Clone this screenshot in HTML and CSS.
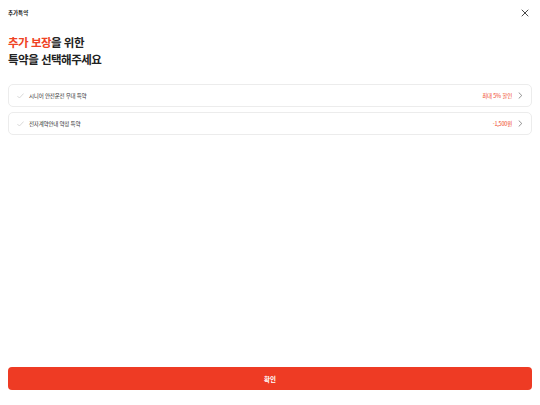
FILE: index.html
```html
<!DOCTYPE html>
<html lang="ko">
<head>
<meta charset="utf-8">
<link rel="stylesheet" href="styles.css">
</head>
<body>
<div class="page">
  <header class="header">
    <span class="header-title">추가특약</span>
    <button class="close" aria-label="닫기">
      <svg width="8" height="8" viewBox="0 0 8 8"><path d="M1 1L7 7M7 1L1 7" stroke="#333" stroke-width="0.9" stroke-linecap="round"/></svg>
    </button>
  </header>
  <h1 class="title"><span class="accent">추가 보장</span>을 위한<br>특약을 선택해주세요</h1>
  <ul class="list">
    <li class="item">
      <svg class="check" width="7" height="6" viewBox="0 0 7 6"><path d="M0.6 3.2L2.4 5L6.4 0.8" fill="none" stroke="#c8c8c8" stroke-width="0.7" stroke-linecap="round" stroke-linejoin="round"/></svg>
      <span class="name">시니어 안전운전 우대 특약</span>
      <span class="benefit">최대 5% 할인</span>
      <svg class="chev" width="5" height="7" viewBox="0 0 5 7"><path d="M1 0.8L3.8 3.5L1 6.2" fill="none" stroke="#777" stroke-width="0.8" stroke-linecap="round" stroke-linejoin="round"/></svg>
    </li>
    <li class="item">
      <svg class="check" width="7" height="6" viewBox="0 0 7 6"><path d="M0.6 3.2L2.4 5L6.4 0.8" fill="none" stroke="#c8c8c8" stroke-width="0.7" stroke-linecap="round" stroke-linejoin="round"/></svg>
      <span class="name">전자계약안내 약정 특약</span>
      <span class="benefit">-1,500원</span>
      <svg class="chev" width="5" height="7" viewBox="0 0 5 7"><path d="M1 0.8L3.8 3.5L1 6.2" fill="none" stroke="#777" stroke-width="0.8" stroke-linecap="round" stroke-linejoin="round"/></svg>
    </li>
  </ul>
  <button class="confirm">확인</button>
</div>
</body>
</html>
```
FILE: styles.css
```css
* { box-sizing: border-box; }
html, body { margin: 0; padding: 0; background: #fff; }
body { font-family: "Noto Sans CJK KR", "Noto Sans", sans-serif; color: #222; }
.page { display: flex; flex-direction: column; height: 405px; padding: 0 8px 15px; }
.header { display: flex; align-items: center; justify-content: space-between; height: 25px; }
.header-title { font-size: 5.5px; font-weight: 700; color: #222; }
.close { border: 0; background: none; padding: 0; width: 8px; height: 8px; display: flex; margin-right: 3px; }
.title { margin: 9px 0 0; font-size: 11.5px; line-height: 17px; font-weight: 700; color: #222; letter-spacing: -0.5px; }
.accent { color: #ef4324; }
.list { list-style: none; margin: 16px 0 0; padding: 0; display: flex; flex-direction: column; gap: 5px; }
.item { display: flex; align-items: center; height: 23px; border: 1px solid #ececec; border-radius: 5px; padding: 0 8px 0 8px; font-size: 5.5px; letter-spacing: -0.2px; }
.check { margin-right: 5px; }
.name { color: #333; flex: 1; }
.benefit { color: #ef4324; margin-right: 6px; }
.confirm { margin-top: auto; height: 23px; border: 0; border-radius: 4px; background: #ee3b24; color: #fff; font-family: inherit; font-size: 6.5px; font-weight: 700; }
```
